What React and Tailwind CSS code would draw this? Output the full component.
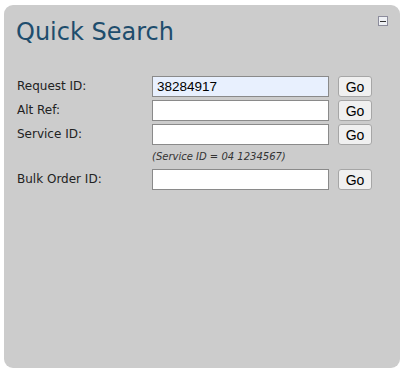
import React from "react";

const verdana = { fontFamily: '"DejaVu Sans", Verdana, sans-serif' };

function Row({ label, value, filled }) {
  return (
    <div className="flex items-center h-[21px]">
      <div className="w-[135px] shrink-0 text-[12px] leading-[16px] text-[#222] -mt-[2px]">{label}</div>
      <input
        defaultValue={value}
        className={`w-[177px] h-[21px] border border-[#8a8a8a] px-[4px] text-[13.5px] text-black outline-none ${filled ? "bg-[#e8f0fe]" : "bg-white"}`}
        style={{ fontFamily: '"Liberation Sans", Arial, sans-serif' }}
      />
      <button
        className="ml-[9px] w-[34px] h-[21px] rounded-[3px] border border-[#a6a6a6] bg-[#f0f0f0] text-[14px] leading-none text-black"
        style={{ fontFamily: '"Liberation Sans", Arial, sans-serif' }}
      >
        Go
      </button>
    </div>
  );
}

export default function App() {
  return (
    <div className="w-[403px] h-[373px] bg-white pt-[5px] pl-[4px]" style={verdana}>
      <div className="relative w-[396px] h-[363px] rounded-[9px] bg-[#cccccc] pt-[13px] pl-[12px]">
        <div className="absolute top-[11px] right-[12px] w-[10px] h-[10px] border border-[#8c8c9c] bg-[#eef0f4] flex items-center justify-center">
          <div className="w-[6px] h-[1px] bg-[#333]" />
        </div>
        <h1 className="text-[24px] leading-[28px] text-[#1e4d6d] font-normal">Quick Search</h1>
        <div className="mt-[30px] pl-[1px] flex flex-col">
          <Row label="Request ID:" value="38284917" filled />
          <div className="h-[3px]" />
          <Row label="Alt Ref:" value="" />
          <div className="h-[3px]" />
          <Row label="Service ID:" value="" />
          <div className="pl-[135px] mt-[5px] mb-[5px] text-[10px] leading-[14px] italic text-[#333]">
            (Service ID = 04 1234567)
          </div>
          <Row label="Bulk Order ID:" value="" />
        </div>
      </div>
    </div>
  );
}
